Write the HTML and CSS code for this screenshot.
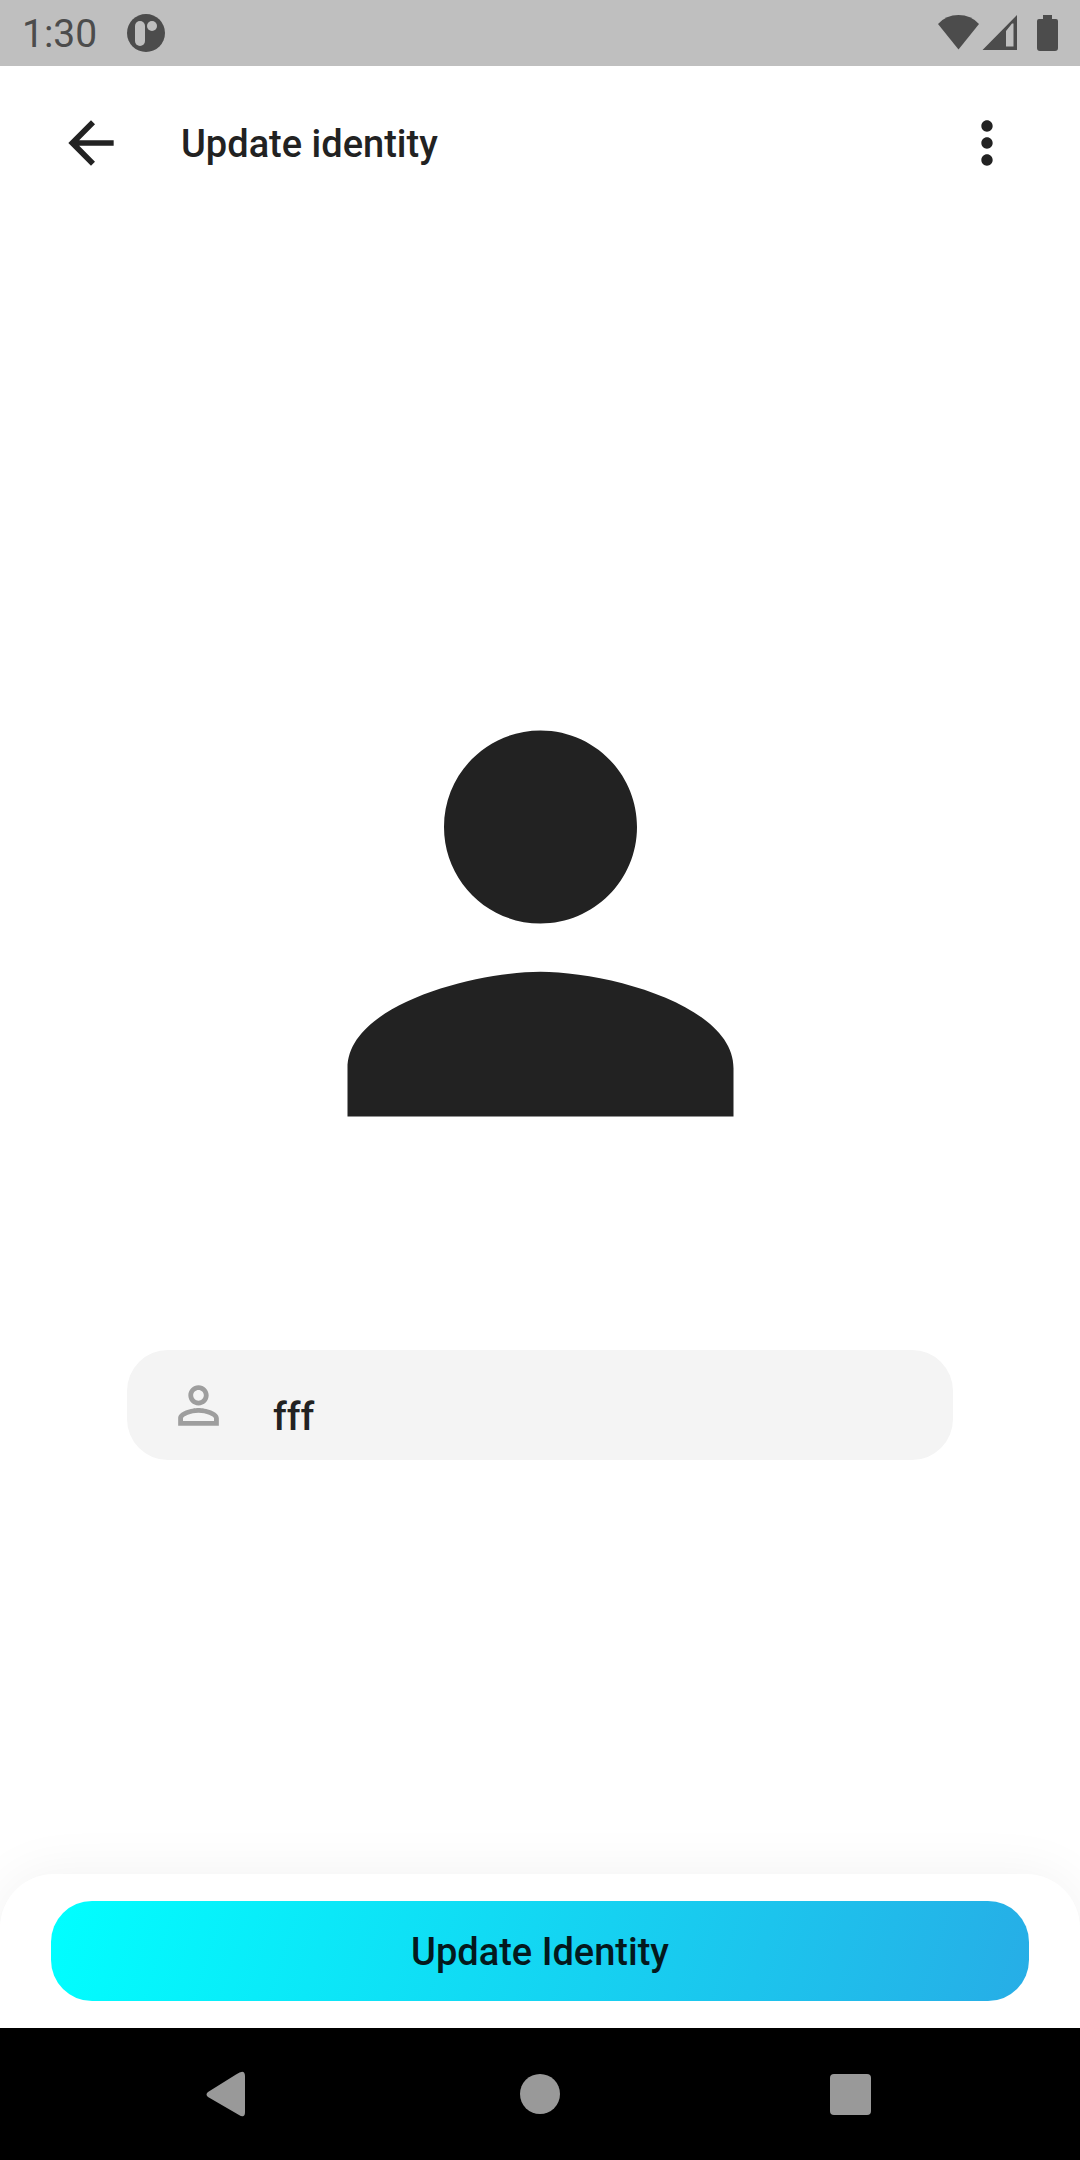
FILE: index.html
```html
<!DOCTYPE html>
<html lang="en">
<head>
<meta charset="utf-8">
<meta name="viewport" content="width=device-width, initial-scale=1">
<title>Update identity</title>
<link rel="stylesheet" href="styles.css">
</head>
<body>
<div class="screen">
  <div class="status-bar">
    <div class="status-left">
      <span class="clock">1:30</span>
      <svg class="status-app" viewBox="0 0 38 38" aria-hidden="true">
        <circle cx="19" cy="19" r="19" fill="#4c4c4c"/>
        <rect x="8" y="7" width="10" height="25" rx="5" fill="#bfbfbf"/>
        <circle cx="25" cy="12" r="5" fill="#bfbfbf"/>
      </svg>
    </div>
    <svg class="status-icons" viewBox="0 0 120 38" aria-hidden="true">
      <g fill="#4c4c4c">
        <path d="M0 10Q8 1 20.500 1T41 10L20.500 35.500Z"/>
        <path fill-rule="evenodd" d="M44.500 36L79 1V36ZM68 17V32.500H75.500V9.500H74Z"/>
        <path d="M105 1h9v4h4q2 0 2 2v27q0 3-3 3h-15q-3 0-3-3V7q0-2 2-2h4z"/>
      </g>
    </svg>
  </div>

  <header class="app-bar">
    <button class="icon-button" type="button" aria-label="Back">
      <svg viewBox="0 0 24 24"><path d="M20 11H7.830l5.590-5.590L12 4l-8 8 8 8 1.410-1.410L7.830 13H20v-2z"/></svg>
    </button>
    <h1 class="title">Update identity</h1>
    <button class="icon-button" type="button" aria-label="More options">
      <svg viewBox="0 0 24 24"><path d="M12 8c1.100 0 2-.9 2-2s-.9-2-2-2-2 .9-2 2 .9 2 2 2zm0 2c-1.100 0-2 .9-2 2s.9 2 2 2 2-.9 2-2-.9-2-2-2zm0 6c-1.100 0-2 .9-2 2s.9 2 2 2 2-.9 2-2-.9-2-2-2z"/></svg>
    </button>
  </header>

  <main class="content">
    <svg class="avatar" viewBox="0 0 24 24" role="img" aria-label="Profile picture"><path d="M12 12c2.210 0 4-1.790 4-4s-1.790-4-4-4-4 1.790-4 4 1.790 4 4 4zm0 2c-2.670 0-8 1.340-8 4v2h16v-2c0-2.660-5.330-4-8-4z"/></svg>
    <label class="field">
      <svg class="field-icon" viewBox="0 0 24 24" aria-hidden="true"><path d="M12 5.900c1.160 0 2.100.94 2.100 2.100s-.94 2.100-2.100 2.100S9.900 9.160 9.900 8s.94-2.100 2.100-2.100m0 9c2.970 0 6.100 1.460 6.100 2.100v1.100H5.900V17c0-.64 3.130-2.100 6.100-2.100M12 4C9.790 4 8 5.790 8 8s1.790 4 4 4 4-1.790 4-4-1.790-4-4-4zm0 9c-2.670 0-8 1.340-8 4v3h16v-3c0-2.660-5.330-4-8-4z"/></svg>
      <input class="field-input" type="text" value="fff" aria-label="Name">
    </label>
  </main>

  <footer class="action-sheet">
    <button class="primary-button" type="button">Update Identity</button>
  </footer>

  <nav class="system-nav" aria-label="System navigation">
    <button class="nav-button" type="button" aria-label="Back">
      <svg viewBox="0 0 66 66"><path d="M12 31L40 13.500Q46 9.500 48 11.500Q49 12.500 49 15V51Q49 54.500 47.500 55Q46 56 43 54L12 36Q9 33.500 12 31Z"/></svg>
    </button>
    <button class="nav-button" type="button" aria-label="Home">
      <svg viewBox="0 0 66 66"><circle cx="33" cy="33" r="20"/></svg>
    </button>
    <button class="nav-button" type="button" aria-label="Recent apps">
      <svg viewBox="0 0 66 66"><rect x="12" y="13" width="41" height="41" rx="4"/></svg>
    </button>
  </nav>
</div>
</body>
</html>
```
FILE: styles.css
```css
* {
  box-sizing: border-box;
}

body {
  margin: 0;
  background: #fff;
  color: #222;
  font-family: Roboto, "Noto Sans", sans-serif;
  font-size: 38px;
  line-height: 48px;
}

button {
  padding: 0;
  border: 0;
  background: none;
  color: inherit;
  font: inherit;
  cursor: pointer;
}

svg {
  display: block;
  flex: none;
}

.screen {
  display: flex;
  flex-direction: column;
  min-height: 100vh;
}

.status-bar {
  display: flex;
  align-items: center;
  justify-content: space-between;
  height: 66px;
  padding: 0 22px;
  background: #bfbfbf;
  color: #4c4c4c;
}

.status-left {
  display: flex;
  align-items: center;
  gap: 30px;
}

.clock {
  padding-top: 2px;
  font-size: 39px;
}

.status-app {
  width: 38px;
  height: 38px;
}

.status-icons {
  width: 120px;
  height: 38px;
}

.app-bar {
  display: flex;
  align-items: center;
  gap: 41px;
  height: 154px;
  padding: 0 44px 0 41px;
}

.icon-button {
  display: grid;
  place-items: center;
  width: 99px;
  height: 99px;
}

.icon-button svg {
  width: 68px;
  height: 68px;
  fill: #222;
}

.title {
  flex: 1;
  margin: 0;
  padding-top: 2px;
  font-size: 38px;
  font-weight: 500;
}

.content {
  display: flex;
  flex: 1;
  flex-direction: column;
  align-items: center;
  justify-content: center;
  gap: 137px;
  padding: 0 127px;
}

.avatar {
  width: 579px;
  max-width: 100%;
  fill: #222;
}

.field {
  display: flex;
  align-items: center;
  width: 100%;
  height: 110px;
  padding: 0 41px;
  gap: 44px;
  border-radius: 41px;
  background: #f4f4f4;
}

.field-icon {
  width: 61px;
  height: 61px;
  fill: #9e9e9e;
}

.field-input {
  flex: 1;
  min-width: 0;
  padding: 24px 0 0;
  border: 0;
  outline: 0;
  background: none;
  color: #222;
  font: inherit;
  font-size: 39px;
  font-weight: 500;
}

.action-sheet {
  padding: 27px 51px;
  border-radius: 54px 54px 0 0;
  background: #fff;
  box-shadow: 0 0 56px rgba(0, 0, 0, 0.06);
}

.primary-button {
  display: block;
  width: 100%;
  height: 100px;
  padding-top: 2px;
  border-radius: 41px;
  background: linear-gradient(108deg, #00ffff, #27ade6);
  color: #04191d;
  font-weight: 500;
}

.system-nav {
  position: relative;
  display: grid;
  grid-template-columns: repeat(3, 1fr);
  height: 132px;
  padding: 0 74px;
  background: #000;
}

.nav-button {
  display: grid;
  place-items: center;
}

.nav-button svg {
  width: 66px;
  height: 66px;
  fill: #999;
}
```
